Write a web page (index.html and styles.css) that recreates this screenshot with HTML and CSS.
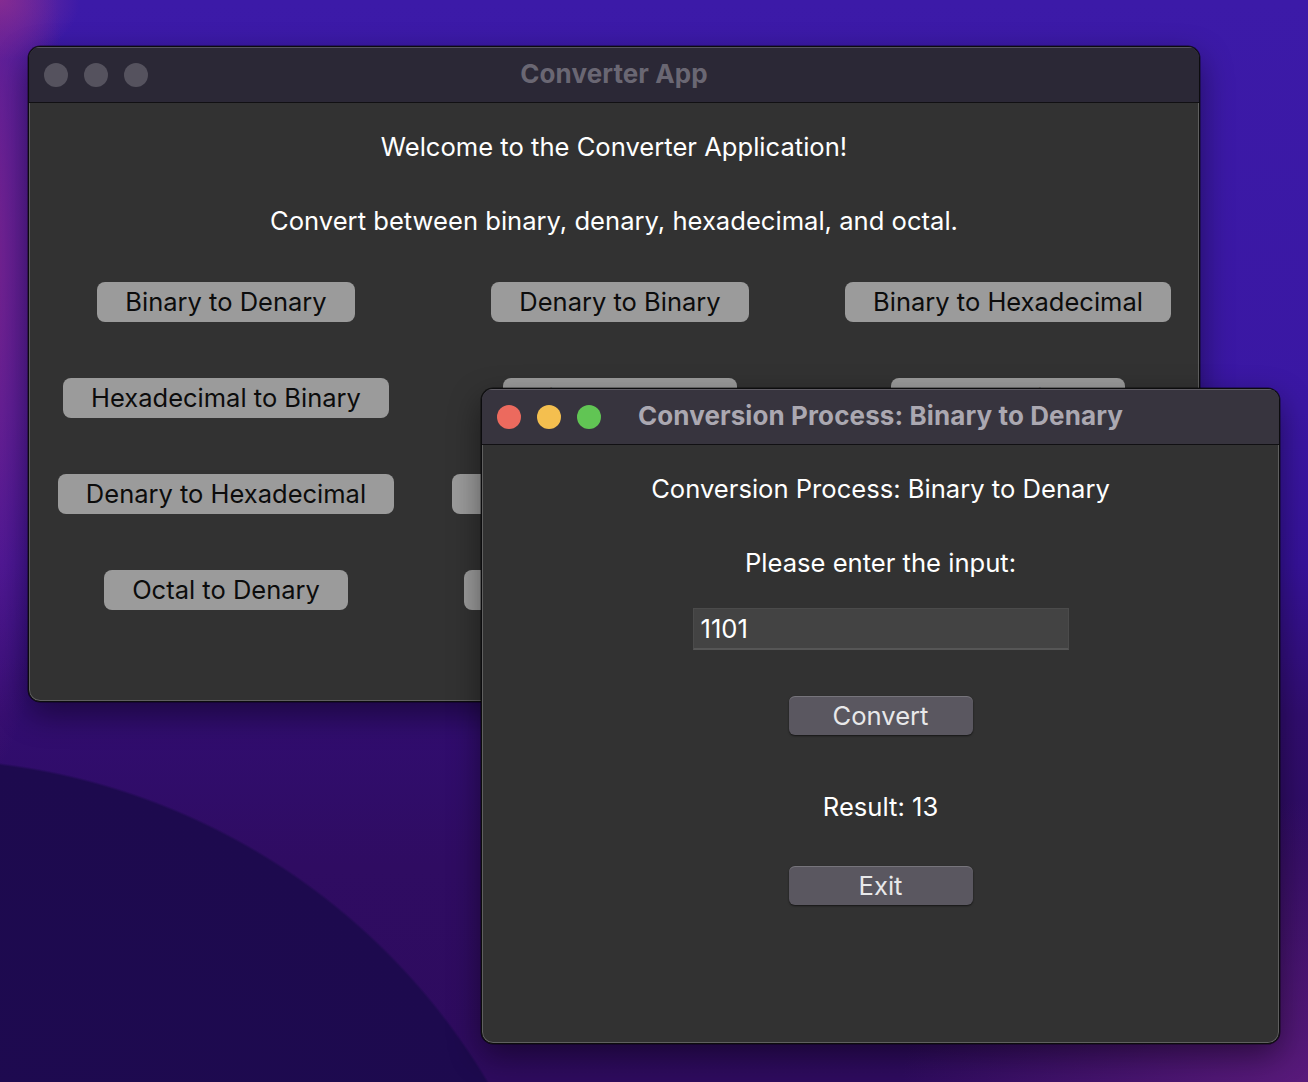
FILE: index.html
```html
<!DOCTYPE html>
<html lang="en">
<head>
<meta charset="utf-8">
<title>Converter App</title>
<link rel="stylesheet" href="styles.css">
</head>
<body>
<div class="desktop">
  <section class="window main-window">
    <header class="titlebar inactive">
      <div class="lights">
        <span class="light"></span><span class="light"></span><span class="light"></span>
      </div>
      <h1 class="title">Converter App</h1>
      <div></div>
    </header>
    <div class="win-body main-body">
      <p class="msg">Welcome to the Converter Application!</p>
      <p class="msg sub">Convert between binary, denary, hexadecimal, and octal.</p>
      <div class="btn-grid">
        <button class="conv-btn">Binary to Denary</button>
        <button class="conv-btn">Denary to Binary</button>
        <button class="conv-btn">Binary to Hexadecimal</button>
        <button class="conv-btn">Hexadecimal to Binary</button>
        <button class="conv-btn">Binary to Octal</button>
        <button class="conv-btn">Octal to Binary</button>
        <button class="conv-btn">Denary to Hexadecimal</button>
        <button class="conv-btn">Hexadecimal to Denary</button>
        <button class="conv-btn">Denary to Octal</button>
        <button class="conv-btn">Octal to Denary</button>
        <button class="conv-btn">Octal to Hexadecimal</button>
        <button class="conv-btn">Hexadecimal to Octal</button>
      </div>
    </div>
  </section>

  <section class="window dialog">
    <header class="titlebar active">
      <div class="lights">
        <span class="light red"></span><span class="light yellow"></span><span class="light green"></span>
      </div>
      <h1 class="title">Conversion Process: Binary to Denary</h1>
      <div></div>
    </header>
    <div class="win-body dialog-body">
      <p class="msg">Conversion Process: Binary to Denary</p>
      <p class="msg prompt">Please enter the input:</p>
      <div class="field">1101</div>
      <button class="mac-btn convert">Convert</button>
      <p class="msg result">Result: 13</p>
      <button class="mac-btn exit">Exit</button>
    </div>
  </section>
</div>
</body>
</html>
```

FILE: styles.css
```css
* { box-sizing: border-box; }

html, body {
  margin: 0;
  padding: 0;
}

body {
  width: 1308px;
  height: 1082px;
  overflow: hidden;
  font-family: Inter, "Noto Sans", "Liberation Sans", sans-serif;
}

.desktop {
  position: relative;
  width: 1308px;
  height: 1082px;
  background:
    radial-gradient(circle 662px at -80px 1420px, #1f0a52 0, #1d0a4e 99.6%, transparent 100%),
    radial-gradient(ellipse 90px 520px at -20px 260px, rgba(150, 40, 130, 0.75), rgba(150, 40, 130, 0) 100%),
    radial-gradient(ellipse 80px 60px at 0px 0px, rgba(140, 50, 150, 0.8), rgba(140, 50, 150, 0) 100%),
    radial-gradient(ellipse 420px 300px at 1320px 1100px, rgba(100, 30, 130, 0.85), rgba(100, 30, 130, 0) 100%),
    linear-gradient(180deg, #3c1aa8 0%, #3a17a3 38%, #36129a 52%, #310d70 66%, #2f0c62 80%, #2e0b5e 100%);
}

.window {
  position: absolute;
  display: flex;
  flex-direction: column;
  background: #323232;
  border: 1px solid #0c0c0e;
  border-radius: 12px;
  overflow: hidden;
  box-shadow:
    inset 0 0 0 1px rgba(255, 255, 255, 0.22),
    0 12px 32px rgba(0, 0, 0, 0.45),
    0 0 0 0.5px rgba(0, 0, 0, 0.6);
}

.main-window {
  left: 28px;
  top: 46px;
  width: 1172px;
  height: 656px;
}

.dialog {
  left: 481px;
  top: 388px;
  width: 799px;
  height: 656px;
}

.titlebar {
  height: 56px;
  flex: none;
  display: grid;
  grid-template-columns: 1fr auto 1fr;
  align-items: center;
  border-bottom: 1px solid #111013;
  border-top: 1px solid rgba(255, 255, 255, 0.2);
}

.titlebar.inactive { background: #2b2836; }
.titlebar.active { background: #37343e; }

.lights {
  display: flex;
  gap: 16px;
  padding-left: 15px;
}

.light {
  width: 24px;
  height: 24px;
  border-radius: 50%;
  background: #55525e;
}

.light.red { background: #ec6a5e; }
.light.yellow { background: #f4bf4f; }
.light.green { background: #61c554; }

.title {
  margin: 0;
  font-size: 26px;
  font-weight: 700;
  letter-spacing: 0.1px;
  white-space: nowrap;
  transform: translateY(-2px);
}

.inactive .title { color: #6a6773; }
.active .title { color: #aba8b1; }

.win-body {
  flex: 1;
  display: flex;
  flex-direction: column;
  align-items: center;
}

.msg {
  margin: 0;
  height: 30px;
  line-height: 30px;
  font-size: 25.6px;
  color: #ffffff;
  white-space: nowrap;
}

.main-body { padding-top: 29px; }
.main-body .sub { margin-top: 44px; }

.btn-grid {
  margin-top: 46px;
  width: 100%;
  display: grid;
  grid-template-columns: 394px 394px 1fr;
  row-gap: 56px;
  justify-items: center;
}

.conv-btn {
  height: 40px;
  padding: 0 28px;
  border: none;
  border-radius: 8px;
  background: #9b9b9b;
  color: #0c0c0c;
  font-family: inherit;
  font-size: 25.5px;
  line-height: 40px;
  white-space: nowrap;
}

.dialog-body { padding-top: 29px; }
.dialog-body .prompt { margin-top: 44px; }

.field {
  margin-top: 30px;
  width: 376px;
  height: 42px;
  background: #434343;
  border: 1px solid #4b4b4b;
  border-bottom: 2px solid #565656;
  color: #ffffff;
  font-size: 25.6px;
  line-height: 39px;
  padding-left: 7px;
}

.mac-btn {
  width: 184px;
  height: 39px;
  border: none;
  border-radius: 6px;
  background: #5a5760;
  color: #e8e8ea;
  font-family: inherit;
  font-size: 25.6px;
  line-height: 39px;
  padding: 0;
  box-shadow:
    inset 0 1px 0 rgba(255, 255, 255, 0.18),
    0 1px 2px rgba(0, 0, 0, 0.6);
}

.mac-btn.convert { margin-top: 46px; }
.dialog-body .result { margin-top: 57px; }
.mac-btn.exit { margin-top: 44px; }
```
